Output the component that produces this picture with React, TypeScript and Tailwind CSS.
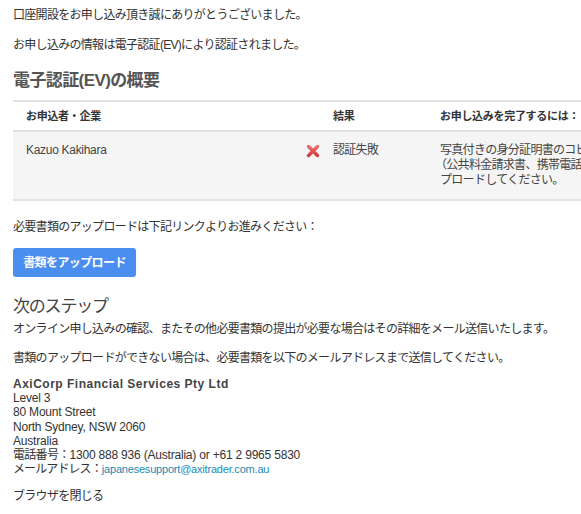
import React from 'react'

const font = { fontFamily: '"Liberation Sans", "Noto Sans CJK JP", sans-serif' }

function FailIcon() {
  return (
    <svg width="14" height="14" viewBox="0 0 14 14" className="shrink-0">
      <defs>
        <linearGradient id="xg" x1="0" y1="0" x2="0" y2="1">
          <stop offset="0" stopColor="#f06a6a" />
          <stop offset="1" stopColor="#d63a3f" />
        </linearGradient>
      </defs>
      <path d="M2.5 2.5 L11.5 11.5 M11.5 2.5 L2.5 11.5" stroke="url(#xg)" strokeWidth="3.4" strokeLinecap="round" />
    </svg>
  )
}

export default function App() {
  return (
    <div className="w-[581px] h-[514px] overflow-hidden bg-white text-[#333]" style={font}>
      <div className="w-[760px] px-[13px] pt-[7px] text-[12px] leading-[16px] tracking-[-0.7px]">
        <p>口座開設をお申し込み頂き誠にありがとうございました。</p>
        <p className="mt-[14px]">お申し込みの情報は電子認証(EV)により認証されました。</p>

        <h2 className="mt-[17px] text-[17px] leading-[22px] font-bold text-[#555] tracking-[-0.6px]">電子認証(EV)の概要</h2>

        {/* summary table */}
        <div className="mt-[8px] w-[727px] border-t-2 border-b-2 border-[#e2e2e2]">
          <div className="grid grid-cols-[287px_127px_1fr] h-[30px] items-center border-b-2 border-[#e2e2e2] text-[11px] font-bold text-[#333] tracking-[-0.3px]">
            <div className="pl-[13px]">お申込者・企業</div>
            <div className="pl-[33px]">結果</div>
            <div className="pl-[13px]">お申し込みを完了するには：</div>
          </div>
          <div className="grid grid-cols-[287px_127px_1fr] bg-[#f5f5f5] pt-[11px] pb-[11px] leading-[15px] text-[#444]">
            <div className="pl-[13px] tracking-[-0.3px]">Kazuo Kakihara</div>
            <div className="flex items-start gap-[13px] pl-[6px]">
              <span className="pt-[1px]"><FailIcon /></span>
              <span>認証失敗</span>
            </div>
            <div className="pl-[13px]">
              写真付きの身分証明書のコピーと現住所確認書類
              <br />
              <span className="-ml-[5px]">（公共料金請求書、携帯電話の請求書など）をアッ</span>
              <br />
              プロードしてください。
            </div>
          </div>
        </div>

        <p className="mt-[18px]">必要書類のアップロードは下記リンクよりお進みください：</p>

        <button className="mt-[13px] h-[29px] w-[123px] rounded-[3px] bg-[#4a8ef0] text-[12px] font-bold text-white tracking-[-0.6px]">
          書類をアップロード
        </button>

        <h2 className="mt-[19px] text-[17px] leading-[22px] text-[#444] tracking-[-1.2px]">次のステップ</h2>
        <p className="mt-[3px]">オンライン申し込みの確認、またその他必要書類の提出が必要な場合はその詳細をメール送信いたします。</p>
        <p className="mt-[13px]">書類のアップロードができない場合は、必要書類を以下のメールアドレスまで送信してください。</p>

        <div className="mt-[11px] leading-[14.2px] tracking-[-0.2px]">
          <div className="font-bold tracking-[0.5px] text-[#444]">AxiCorp Financial Services Pty Ltd</div>
          <div>Level 3</div>
          <div>80 Mount Street</div>
          <div>North Sydney, NSW 2060</div>
          <div>Australia</div>
          <div>
            <span className="tracking-[-0.7px]">電話番号：</span>1300 888 936 (Australia) or +61 2 9965 5830
          </div>
          <div>
            <span className="tracking-[-0.9px]">メールアドレス：</span>
            <a href="#" className="text-[11px] text-[#1b8ab5]">japanesesupport@axitrader.com.au</a>
          </div>
        </div>

        <p className="mt-[12px]">ブラウザを閉じる</p>
      </div>
    </div>
  )
}
